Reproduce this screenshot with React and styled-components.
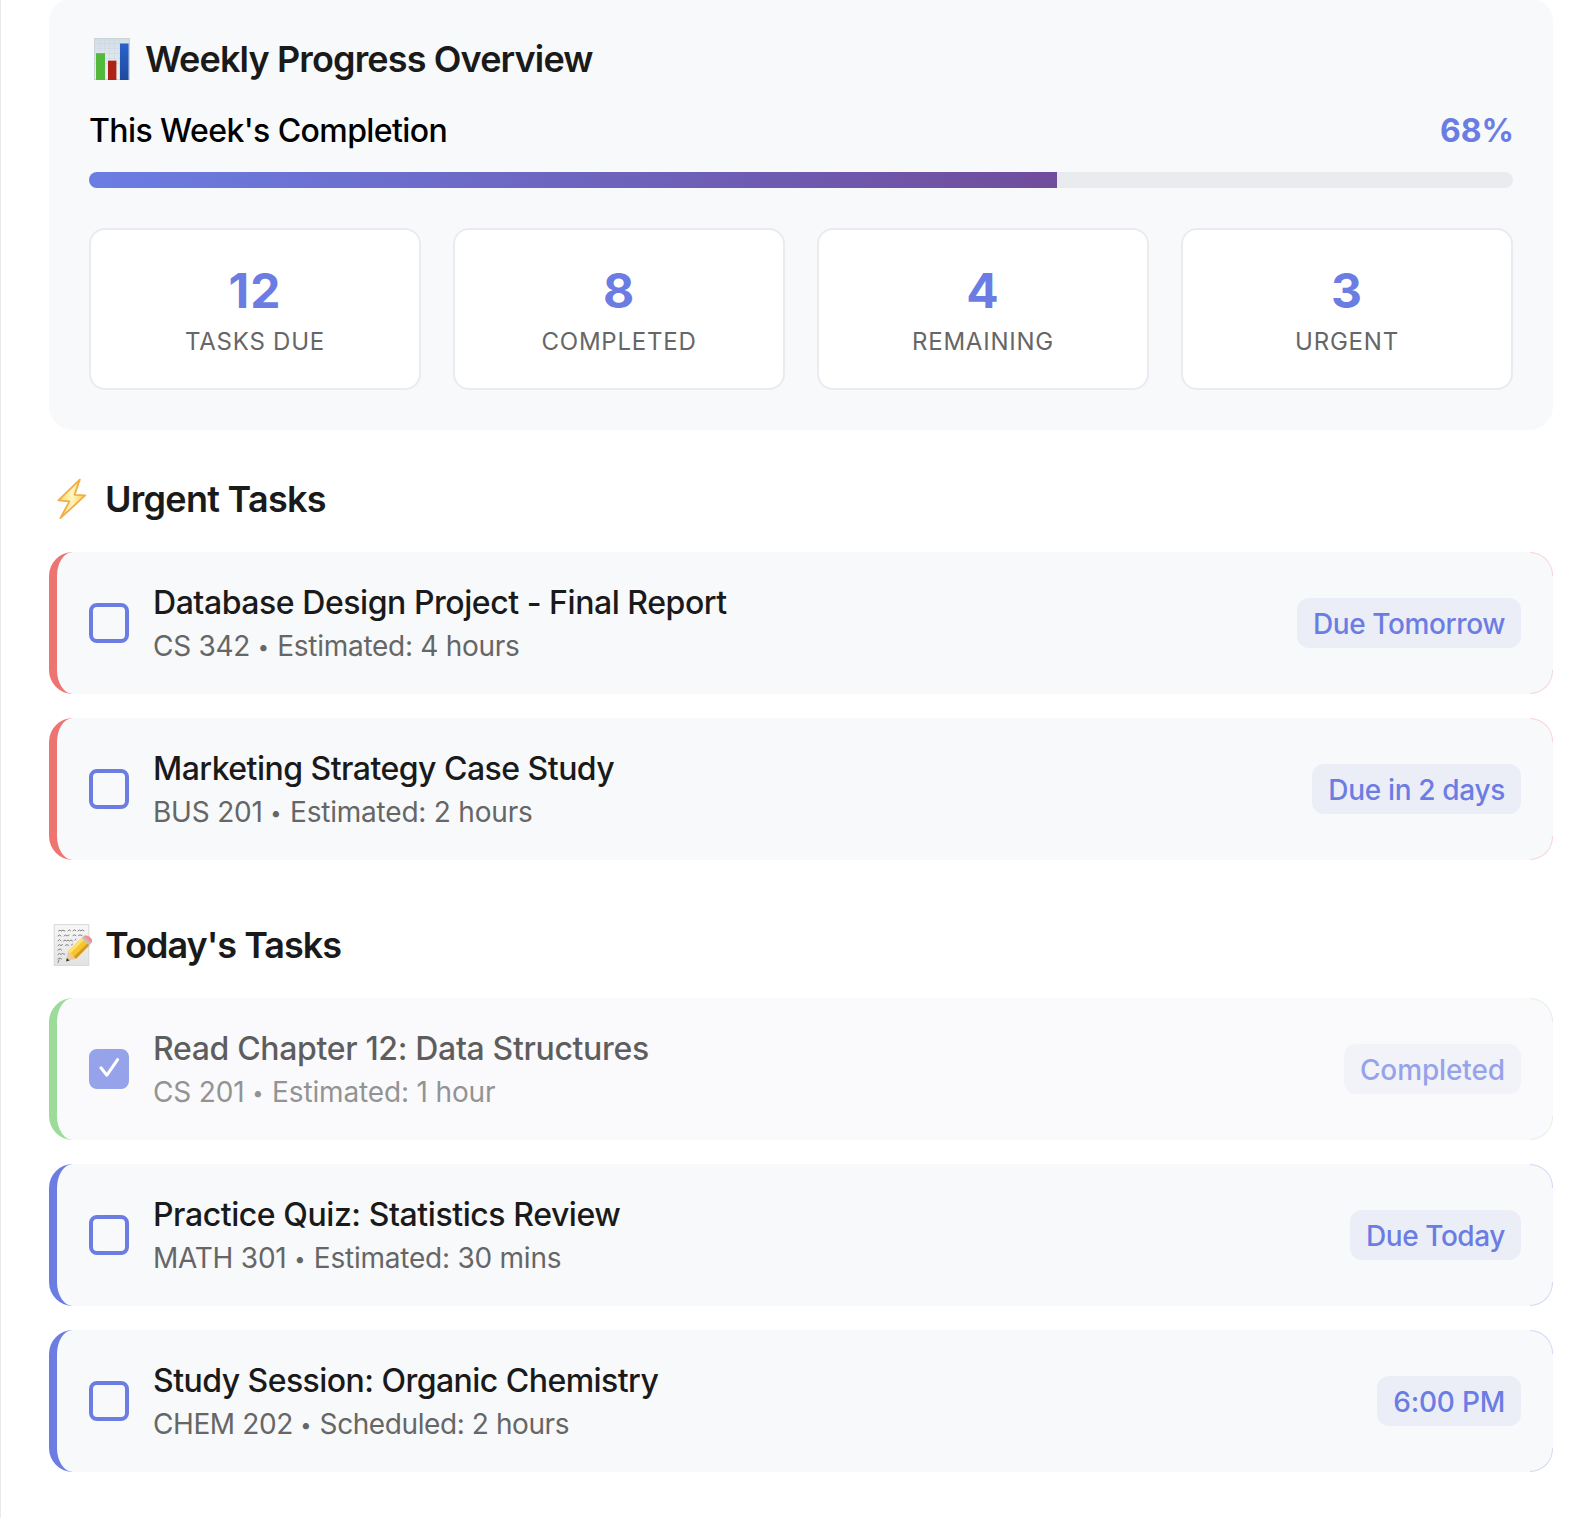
import React from "react";
import styled, { createGlobalStyle } from "styled-components";

const GlobalStyle = createGlobalStyle`
  *, *::before, *::after { box-sizing: border-box; }
  body {
    margin: 0;
    background: #fff;
    font-family: Inter, "Open Sans", sans-serif;
    color: #000;
  }
`;

const Page = styled.main`
  height: 1518px;
  overflow: hidden;
  padding: 0 43px 0 48px;
  border-left: 1px solid #e9eaee;
`;

const Overview = styled.section`
  margin-top: -2px;
  padding: 40px;
  border-radius: 24px;
  background: #f8f9fb;
`;

const Heading = styled.h2`
  display: flex;
  align-items: center;
  gap: 11px;
  height: 42px;
  margin: 0 0 32px;
  font-size: 36px;
  line-height: 42px;
  font-weight: 600;
  letter-spacing: ${(p) => p.$track}px;
  color: #1a1a1a;
  white-space: nowrap;
`;

const Emoji = styled.svg`
  flex: none;
  width: 45px;
  height: 42px;
`;

const ProgressHeader = styled.div`
  display: flex;
  justify-content: space-between;
  margin-bottom: 23px;
  padding-top: 1px;
  font-size: 32px;
  line-height: 36px;
`;

const ProgressLabel = styled.span`
  font-weight: 500;
  letter-spacing: -0.58px;
`;

const ProgressValue = styled.span`
  font-weight: 700;
  margin-right: -1px;
  color: #6b7de3;
`;

const Track = styled.div`
  height: 16px;
  margin-bottom: 40px;
  border-radius: 8px;
  background: #e9ebef;
  overflow: hidden;
`;

const Fill = styled.div`
  height: 100%;
  background: linear-gradient(90deg, #6b7de3 0%, #704d9c 100%);
`;

const StatGrid = styled.div`
  display: grid;
  grid-template-columns: repeat(4, 1fr);
  gap: 32px;
`;

const StatCard = styled.div`
  display: flex;
  flex-direction: column;
  align-items: center;
  gap: 8px;
  padding: 32px;
  border: 2px solid #e9ebef;
  border-radius: 16px;
  background: #fff;
`;

const StatNumber = styled.div`
  font-size: 48px;
  line-height: 57px;
  font-weight: 700;
  letter-spacing: 1px;
  color: #6b7de3;
`;

const StatLabel = styled.div`
  font-size: 24px;
  line-height: 29px;
  font-weight: 400;
  letter-spacing: 0.76px;
  text-transform: uppercase;
  color: #666;
`;

const Section = styled.section`
  margin-top: ${(p) => p.$top}px;
`;

const TaskList = styled.div`
  display: flex;
  flex-direction: column;
  gap: 24px;
`;

const TaskRow = styled.article`
  position: relative;
  display: flex;
  align-items: center;
  gap: 24px;
  height: 142px;
  padding: 32px;
  border-left: 8px solid ${(p) => p.$accent};
  border-radius: 24px;
  background: #f8f9fb;
  opacity: ${(p) => (p.$done ? 0.7 : 1)};

  &::before,
  &::after {
    content: "";
    position: absolute;
    right: 0;
    width: 23px;
    height: 24px;
    border: 0 solid ${(p) => p.$accent};
    border-right-width: 1px;
    opacity: 0.26;
  }
  &::before {
    top: 0;
    border-top-width: 1px;
    border-top-right-radius: 24px;
  }
  &::after {
    bottom: 0;
    border-bottom-width: 1px;
    border-bottom-right-radius: 24px;
  }
`;

const Checkbox = styled.span`
  flex: none;
  display: flex;
  width: 40px;
  height: 40px;
  border: 4px solid #6b7de3;
  border-radius: 8px;
  background: ${(p) => (p.$checked ? "#6b7de3" : "transparent")};
`;

const Tick = styled.svg`
  width: 32px;
  height: 32px;
`;

const TaskBody = styled.div`
  flex: 1;
  display: flex;
  flex-direction: column;
  gap: 8px;
  height: 78px;
  white-space: nowrap;
`;

const TaskTitle = styled.div`
  font-size: 32px;
  line-height: 37px;
  font-weight: 500;
  letter-spacing: ${(p) => p.$track}px;
  color: #1a1a1a;
`;

const TaskMeta = styled.div`
  height: 34px;
  font-size: 28px;
  line-height: 34px;
  font-weight: 400;
  letter-spacing: ${(p) => p.$track}px;
  color: #666;
`;

const Dot = styled.span`
  margin-right: 1px;
  font-size: 20px;
  line-height: 0;
  vertical-align: 2px;
`;

const Badge = styled.span`
  flex: none;
  height: 50px;
  padding: 9px 16px 7px;
  border-radius: 12px;
  background: #eceef7;
  font-size: 28px;
  line-height: 34px;
  font-weight: 500;
  letter-spacing: ${(p) => p.$track}px;
  color: #6b7de3;
`;

const ChartIcon = () => (
  <Emoji viewBox="0 0 45 42">
    <defs>
      <linearGradient id="paper" x1="0" y1="0" x2="0" y2="1">
        <stop offset="0" stopColor="#d3dde6" />
        <stop offset="1" stopColor="#edf2f6" />
      </linearGradient>
      <linearGradient id="blueBar" x1="0" y1="0" x2="0" y2="1">
        <stop offset="0" stopColor="#2862cc" />
        <stop offset="1" stopColor="#1e4a9c" />
      </linearGradient>
    </defs>
    <rect x="5.5" y="0.5" width="35" height="41" fill="url(#paper)" stroke="#ccd3d9" />
    <path
      d="M10.5 1v40M15.5 1v40M20.5 1v40M25.5 1v40M30.5 1v40M6 5.5h34M6 10.5h34M6 15.5h34M6 20.5h34M6 25.5h34"
      stroke="#c8d6e4"
      strokeWidth="0.5"
    />
    <rect x="7" y="15" width="9" height="27" fill="#53b93c" />
    <rect x="19" y="22.5" width="8.4" height="19.5" fill="#b02218" />
    <rect x="31" y="5.3" width="8.6" height="36.7" fill="url(#blueBar)" />
    <path d="M7 15h9M31 5.3h8.6M19 22.5h8.4" stroke="#fff" strokeOpacity="0.25" />
  </Emoji>
);

const BoltIcon = () => (
  <Emoji viewBox="0 0 45 42">
    <defs>
      <linearGradient id="bolt" x1="0" y1="0" x2="1" y2="0">
        <stop offset="0" stopColor="#fbd661" />
        <stop offset="0.5" stopColor="#fff6c0" />
        <stop offset="1" stopColor="#fbcf55" />
      </linearGradient>
    </defs>
    <path
      d="M30.8 1.6 9.4 22.4 20.4 23.3 11.4 40.2 36.2 17.4 25.6 16.8Z"
      fill="url(#bolt)"
      stroke="#f2ac48"
      strokeWidth="1.8"
      strokeLinejoin="round"
    />
  </Emoji>
);

const MemoIcon = () => (
  <Emoji viewBox="0 0 45 42">
    <defs>
      <linearGradient id="sheet" x1="0" y1="0" x2="0" y2="1">
        <stop offset="0" stopColor="#f7f7f7" />
        <stop offset="1" stopColor="#e2e2e2" />
      </linearGradient>
    </defs>
    <rect x="5.2" y="0.6" width="34.6" height="40.8" fill="url(#sheet)" stroke="#d8d8d8" />
    <g fill="none" stroke="#777" strokeWidth="0.9" strokeLinecap="round">
      <path d="M9.5 7l1.5-1 1 1.2 2-1 2 .8M19 6.8l1.5-.8 1 .8M24 6.8l1.5-1 1.3 1M29 6.8l1.4-.8 1.5.8 1.4-.8 1.7.8" />
      <path d="M9 12l1.6-1 1.4 1M15 12l1.5-1 1.5 1 2-1M24 11.6l1.4-.8 1.4.8M29.5 11.6l1.5-.8 2 .8" />
      <path d="M9 17l1.5-1.5 1.5 1.3M14.5 17l1.5-1 1.5 1 1.5-1 1.5 1 1.5-1 1.5 1M26 16l1-.8" />
      <path d="M9 21.6l1.5-1 1.5 1 1.5-1M16.5 21.4l1.5-.8 1.5.8M22.5 20.8l1-.6" />
      <path d="M9 26l2-1 1.5 1M9 30.5l1.5-1 1.5 1 1.5-1 2 .8M9 35l2-1 1.6 1M9 38.5l1-2.5" />
    </g>
    <path d="M17.2 37.6 19 27.2 27 34.8Z" fill="#edcb98" />
    <path d="M17.2 37.6 17.8 34 20.6 36.6Z" fill="#333" />
    <path d="M19 27.2 32.8 13.8 40.2 21.4 27 34.8Z" fill="#f5c632" />
    <path d="M19 27.2 32.8 13.8 35 16.1 21.3 29.5Z" fill="#ffe06a" />
    <path d="M24.8 32.8 38.2 19.4 40.2 21.4 27 34.8Z" fill="#d99a1c" />
    <path d="M32.8 13.8 34.6 12.2 42 19.6 40.2 21.4Z" fill="#b9bdc0" />
    <path d="M34.6 12.2 35.4 11.6Q40 10.6 43 15.6 43.4 18 42 19.6Z" fill="#ee8f93" />
  </Emoji>
);

const stats = [
  { value: 12, label: "Tasks Due" },
  { value: 8, label: "Completed" },
  { value: 4, label: "Remaining" },
  { value: 3, label: "Urgent" },
];

const RED = "#ee7472";
const GREEN = "#75cc72";
const BLUE = "#6b7de3";

const urgentTasks = [
  { title: "Database Design Project - Final Report", tt: -0.45, course: "CS 342", detail: "Estimated: 4 hours", mt: -0.28, badge: "Due Tomorrow", bt: -0.41, accent: RED },
  { title: "Marketing Strategy Case Study", tt: -0.52, course: "BUS 201", detail: "Estimated: 2 hours", mt: -0.21, badge: "Due in 2 days", bt: -0.33, accent: RED },
];

const todayTasks = [
  { title: "Read Chapter 12: Data Structures", tt: -0.34, course: "CS 201", detail: "Estimated: 1 hour", mt: -0.15, badge: "Completed", bt: -0.12, accent: GREEN, done: true },
  { title: "Practice Quiz: Statistics Review", tt: -0.43, course: "MATH 301", detail: "Estimated: 30 mins", mt: -0.23, badge: "Due Today", bt: -0.42, accent: BLUE },
  { title: "Study Session: Organic Chemistry", tt: -0.54, course: "CHEM 202", detail: "Scheduled: 2 hours", mt: -0.41, badge: "6:00 PM", bt: -0.22, accent: BLUE },
];

const Task = ({ task }) => (
  <TaskRow $accent={task.accent} $done={task.done}>
    <Checkbox $checked={task.done}>
      {task.done && (
        <Tick viewBox="0 0 32 32" fill="none" stroke="#fff" strokeWidth="3" strokeLinecap="round" strokeLinejoin="round">
          <path d="M7.9 14.8 13.9 22.2 24.6 6.6" />
        </Tick>
      )}
    </Checkbox>
    <TaskBody>
      <TaskTitle $track={task.tt}>{task.title}</TaskTitle>
      <TaskMeta $track={task.mt}>
        {task.course} <Dot>•</Dot> {task.detail}
      </TaskMeta>
    </TaskBody>
    <Badge $track={task.bt}>{task.badge}</Badge>
  </TaskRow>
);

export default function App() {
  const progress = 68;
  return (
    <>
      <GlobalStyle />
      <Page>
        <Overview>
          <Heading $track={-0.86}>
            <ChartIcon />
            Weekly Progress Overview
          </Heading>
          <ProgressHeader>
            <ProgressLabel>This Week's Completion</ProgressLabel>
            <ProgressValue>{progress}%</ProgressValue>
          </ProgressHeader>
          <Track>
            <Fill style={{ width: `${progress}%` }} />
          </Track>
          <StatGrid>
            {stats.map((s) => (
              <StatCard key={s.label}>
                <StatNumber>{s.value}</StatNumber>
                <StatLabel>{s.label}</StatLabel>
              </StatCard>
            ))}
          </StatGrid>
        </Overview>

        <Section $top={48}>
          <Heading $track={-0.72}>
            <BoltIcon />
            Urgent Tasks
          </Heading>
          <TaskList>
            {urgentTasks.map((t) => (
              <Task key={t.title} task={t} />
            ))}
          </TaskList>
        </Section>

        <Section $top={64}>
          <Heading $track={-0.98}>
            <MemoIcon />
            Today's Tasks
          </Heading>
          <TaskList>
            {todayTasks.map((t) => (
              <Task key={t.title} task={t} />
            ))}
          </TaskList>
        </Section>
      </Page>
    </>
  );
}
